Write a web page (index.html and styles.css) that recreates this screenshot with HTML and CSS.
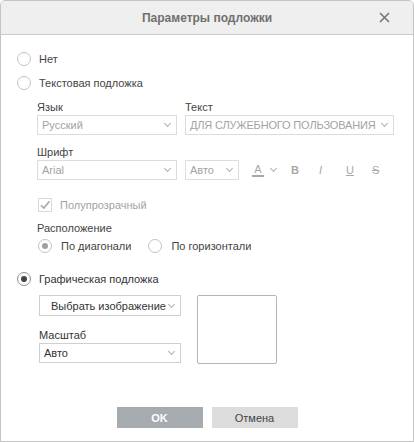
FILE: index.html
```html
<!DOCTYPE html>
<html lang="ru">
<head>
<meta charset="utf-8">
<link rel="stylesheet" href="styles.css">
</head>
<body>
<div class="dialog">
  <div class="header">
    <span class="title">Параметры подложки</span>
    <span class="close">
      <svg width="11" height="11" viewBox="0 0 11 11"><path d="M1 1 L10 10 M10 1 L1 10" stroke="#777" stroke-width="1.6"/></svg>
    </span>
  </div>
  <div class="content">
    <label class="radio-row r-none"><span class="radio"></span><span>Нет</span></label>
    <label class="radio-row r-text"><span class="radio"></span><span>Текстовая подложка</span></label>

    <div class="text-block">
      <div class="row1">
        <div class="field f-lang">
          <div class="lbl">Язык</div>
          <div class="select dis w140"><span>Русский</span><span class="caret"></span></div>
        </div>
        <div class="field f-text">
          <div class="lbl">Текст</div>
          <div class="select dis w209"><span class="nowrap tight">ДЛЯ СЛУЖЕБНОГО ПОЛЬЗОВАНИЯ</span><span class="caret"></span></div>
        </div>
      </div>
      <div class="row2">
        <div class="field">
          <div class="lbl">Шрифт</div>
          <div class="select dis w140"><span>Arial</span><span class="caret"></span></div>
        </div>
        <div class="tools">
          <div class="select dis w54"><span>Авто</span><span class="caret"></span></div>
          <div class="tool t-color"><span class="a-letter">A</span><span class="caret"></span></div>
          <div class="tool t-b">B</div>
          <div class="tool t-i">I</div>
          <div class="tool t-u">U</div>
          <div class="tool t-s">S</div>
        </div>
      </div>
      <label class="check-row">
        <span class="checkbox">
          <svg width="12" height="12" viewBox="0 0 12 12"><path d="M2 6.2 L4.8 9 L10.5 2.2" stroke="#a8a8a8" stroke-width="1.6" fill="none"/></svg>
        </span>
        <span>Полупрозрачный</span>
      </label>
      <div class="lbl lbl-pos">Расположение</div>
      <div class="pos-row">
        <label class="radio-row sub"><span class="radio dis-checked"></span><span>По диагонали</span></label>
        <label class="radio-row sub"><span class="radio"></span><span>По горизонтали</span></label>
      </div>
    </div>

    <label class="radio-row r-img"><span class="radio checked"></span><span class="dark">Графическая подложка</span></label>
    <div class="img-block">
      <div class="img-left">
        <div class="btn-select"><span class="nowrap">Выбрать изображение</span><span class="caret"></span></div>
        <div class="lbl lbl-scale">Масштаб</div>
        <div class="select w142"><span class="dark">Авто</span><span class="caret"></span></div>
      </div>
      <div class="preview"></div>
    </div>
  </div>
  <div class="footer">
    <button class="btn ok">OK</button>
    <button class="btn cancel">Отмена</button>
  </div>
</div>
</body>
</html>
```

FILE: styles.css
```css
* { box-sizing: border-box; }
html, body { margin: 0; padding: 0; background: #fff; }
body {
  font-family: Arial, "Liberation Sans", sans-serif;
  font-size: 11px;
  color: #444;
}
.nowrap { white-space: nowrap; }
.tight { letter-spacing: -0.15px; }
.dialog {
  width: 414px;
  height: 442px;
  border: 1px solid #c4c4c4;
  border-radius: 5px 5px 0 0;
  display: flex;
  flex-direction: column;
  overflow: hidden;
}
.header {
  height: 34px;
  background: #efefef;
  border-bottom: 1px solid #cbcbcb;
  position: relative;
  display: flex;
  align-items: center;
  justify-content: center;
  flex: none;
}
.title {
  font-size: 12px;
  font-weight: bold;
  color: #707070;
}
.close {
  position: absolute;
  right: 23px;
  top: 11px;
  width: 11px;
  height: 11px;
  display: flex;
}
.content {
  flex: 1;
  padding: 16px 0 0 16px;
}
.radio-row {
  display: flex;
  align-items: center;
  gap: 8px;
  height: 16px;
}
.r-text { margin-top: 8px; }
.radio {
  width: 14px;
  height: 14px;
  border: 1px solid #c2c2c2;
  border-radius: 50%;
  background: #fff;
  display: inline-block;
  position: relative;
  flex: none;
}
.radio.checked { border-color: #8e8e8e; }
.radio.checked::after,
.radio.dis-checked::after {
  content: "";
  position: absolute;
  left: 3px; top: 3px;
  width: 6px; height: 6px;
  border-radius: 50%;
  background: #444;
}
.radio.dis-checked::after { background: #a0a0a0; }
.text-block {
  padding-left: 20px;
  margin-top: 10px;
}
.row1, .row2 { display: flex; gap: 8px; }
.row2 { margin-top: 11px; }
.lbl { line-height: 13px; margin-bottom: 1px; color: #444; }
.select {
  height: 20px;
  border: 1px solid #cfcfcf;
  display: flex;
  align-items: center;
  justify-content: space-between;
  padding: 0 6px 0 4px;
  color: #444;
  background: #fff;
  overflow: hidden;
}
.select.dis { color: #a3a3a3; border-color: #dcdcdc; }
.w140 { width: 140px; }
.w142 { width: 142px; }
.w209 { width: 209px; }
.w54 { width: 54px; }
.caret {
  width: 5px; height: 5px;
  border-right: 1px solid #b0b0b0;
  border-bottom: 1px solid #b0b0b0;
  transform: rotate(45deg);
  margin-top: -3px;
  flex: none;
}
.tools {
  display: flex;
  align-items: center;
  align-self: flex-end;
  height: 20px;
}
.tool {
  color: #a8a8a8;
  font-size: 11px;
  display: flex;
  align-items: center;
}
.t-color { margin-left: 13px; gap: 7px; }
.a-letter {
  display: inline-block;
  width: 12px;
  text-align: center;
  border-bottom: 2px solid #a8a8a8;
  line-height: 12px;
}
.t-b { font-weight: bold; margin-left: 15px; }
.t-i { font-style: italic; margin-left: 20px; }
.t-u { text-decoration: underline; margin-left: 24px; }
.t-s { text-decoration: line-through; margin-left: 18px; }
.check-row {
  display: flex;
  align-items: center;
  gap: 8px;
  margin-top: 18px;
  margin-left: 1px;
  color: #a3a3a3;
  height: 14px;
}
.checkbox {
  width: 14px; height: 14px;
  border: 1px solid #dadada;
  display: flex;
  align-items: center;
  justify-content: center;
}
.lbl-pos { margin-top: 10px; margin-bottom: 3px; }
.pos-row { display: flex; gap: 17px; padding-left: 1px; }
.pos-row .radio-row { gap: 9px; }
.r-img { margin-top: 17px; }
.dark { color: #333; }
.img-block {
  display: flex;
  gap: 16px;
  padding-left: 22px;
  margin-top: 8px;
}
.img-left { display: flex; flex-direction: column; }
.btn-select {
  width: 142px;
  height: 21px;
  border: 1px solid #cfcfcf;
  display: flex;
  align-items: center;
  justify-content: space-between;
  padding: 0 6px 0 11px;
  color: #333;
  font-size: 11px;
}
.lbl-scale { margin-top: 13px; margin-bottom: 1px; color: #333; }
.preview {
  width: 80px;
  height: 69px;
  border: 1px solid #b5b5b5;
  border-radius: 2px;
}
.footer {
  height: 47px;
  flex: none;
  display: flex;
  justify-content: center;
  align-items: flex-end;
  gap: 9px;
  padding-bottom: 13px;
}
.btn {
  width: 86px;
  height: 21px;
  border: none;
  font-family: Arial, "Liberation Sans", sans-serif;
  font-size: 11px;
  padding: 0;
}
.ok { background: #a6abb0; color: #fff; font-weight: bold; }
.cancel { background: #dcdcdc; color: #444; }
```
